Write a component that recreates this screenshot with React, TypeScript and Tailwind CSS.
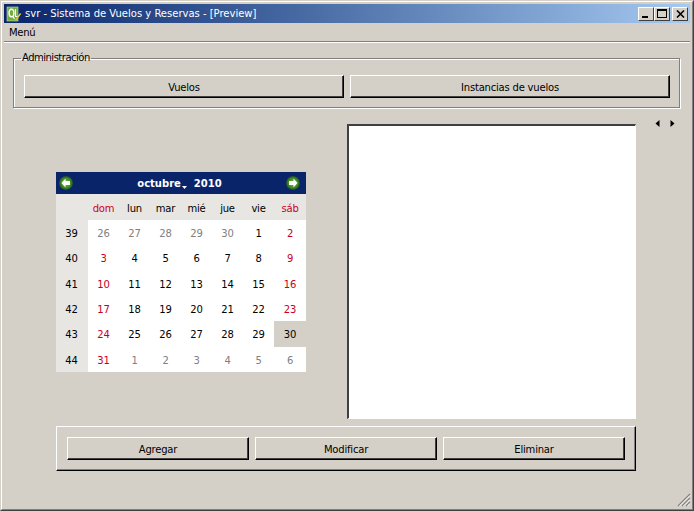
import { ReactNode } from "react";

const font = "font-['DejaVu_Sans',sans-serif]";

const weeks = [
  { n: 39, days: [26, 27, 28, 29, 30, 1, 2] },
  { n: 40, days: [3, 4, 5, 6, 7, 8, 9] },
  { n: 41, days: [10, 11, 12, 13, 14, 15, 16] },
  { n: 42, days: [17, 18, 19, 20, 21, 22, 23] },
  { n: 43, days: [24, 25, 26, 27, 28, 29, 30] },
  { n: 44, days: [31, 1, 2, 3, 4, 5, 6] },
];

const weekdays = ["dom", "lun", "mar", "mié", "jue", "vie", "sáb"];

function RaisedButton({ children }: { children: ReactNode }) {
  return (
    <button
      type="button"
      className="flex-1 h-[23px] pt-[1px] bg-[#d4d0c8] border-t border-l border-t-white border-l-white border-b border-r border-b-black border-r-black shadow-[inset_-1px_-1px_0_#404040] text-[10px] tracking-[-0.2px] text-black"
    >
      {children}
    </button>
  );
}

function CaptionButton({ children, className = "" }: { children: ReactNode; className?: string }) {
  return (
    <div
      className={`w-4 h-[14px] flex items-center justify-center bg-[#d4d0c8] border-t border-l border-t-white border-l-white border-b border-r border-b-[#404040] border-r-[#404040] ${className}`}
    >
      {children}
    </div>
  );
}

function AppIcon() {
  return (
    <svg width="16" height="16" viewBox="0 0 16 16" className="shrink-0">
      <rect x="1" y="1" width="11" height="14" fill="#6fae3c" />
      <rect x="1" y="1" width="11" height="14" fill="none" stroke="#c9e3a8" strokeWidth="0.6" />
      <ellipse cx="5.5" cy="7" rx="2.4" ry="3.8" fill="none" stroke="#fff" strokeWidth="1.4" />
      <path d="M6.5 10l2 3" stroke="#fff" strokeWidth="1.2" />
      <path d="M9.5 3v7.5h2" stroke="#fff" strokeWidth="1.2" fill="none" />
      <path d="M9 14l5-7 1.2 1-5 6.5z" fill="#e6c53a" />
    </svg>
  );
}

function NavArrow({ dir, id }: { dir: "left" | "right"; id: string }) {
  return (
    <svg width="16" height="16" viewBox="0 0 16 16">
      <defs>
        <radialGradient id={id} cx="50%" cy="50%" r="50%">
          <stop offset="0%" stopColor="#7fc04a" />
          <stop offset="70%" stopColor="#3f8a24" />
          <stop offset="100%" stopColor="#1c4a30" />
        </radialGradient>
      </defs>
      <circle cx="8" cy="8" r="7" fill={`url(#${id})`} />
      <path
        d={dir === "left" ? "M7.5 3.5L3.5 8l4 4.5V10H12V6H7.5z" : "M8.5 3.5L12.5 8l-4 4.5V10H4V6h4.5z"}
        fill="#fff"
      />
    </svg>
  );
}

function Calendar() {
  return (
    <div className="w-[250px] text-[10px] tracking-[-0.2px] bg-white">
      <div className="h-[22px] bg-[#0a246a] flex items-center justify-between pl-[2px] pr-[5px] text-white">
        <NavArrow dir="left" id="nav-prev" />
        <div className="flex items-center font-bold text-[10px] tracking-normal">
          <span>octubre</span>
          <svg width="5" height="3" viewBox="0 0 5 3" className="mt-[8px] ml-[1px] mr-[7px]">
            <path d="M0 0h5L2.5 3z" fill="#fff" />
          </svg>
          <span>2010</span>
        </div>
        <NavArrow dir="right" id="nav-next" />
      </div>
      <div className="grid grid-cols-[32px_repeat(6,31px)_32px] h-[26px] bg-[#e8e6e2] items-center text-center pt-[2px]">
        <span />
        {weekdays.map((d, i) => (
          <span key={d} className={i === 0 || i === 6 ? "text-[#c8001e]" : "text-black"}>
            {d}
          </span>
        ))}
      </div>
      {weeks.map((w, wi) => (
        <div key={w.n} className="grid grid-cols-[32px_repeat(6,31px)_32px] h-[25.34px]">
          <span className="bg-[#e8e6e2] flex items-center justify-center text-black pt-[2px] pr-[1px]">{w.n}</span>
          {w.days.map((d, i) => {
            const other = (wi === 0 && i < 5) || (wi === 5 && i > 0);
            const selected = wi === 4 && i === 6;
            const color = other ? "text-[#808080]" : i === 0 || i === 6 ? "text-[#c8001e]" : "text-black";
            return (
              <span
                key={i}
                className={`flex items-center justify-center pt-[2px] ${selected ? "bg-[#d4d0c8] text-black" : `bg-white ${color}`}`}
              >
                {d}
              </span>
            );
          })}
        </div>
      ))}
    </div>
  );
}

export default function App() {
  return (
    <div className={`w-[694px] h-[511px] relative border-t border-l border-t-[#d4d0c8] border-l-[#d4d0c8] border-b border-r border-b-[#404040] border-r-[#404040] ${font} overflow-hidden`}>
      <div className="h-full border-t border-l border-t-white border-l-white border-b border-r border-b-[#808080] border-r-[#808080] bg-[#d4d0c8] p-[2px] flex flex-col">
        {/* title bar */}
        <div className="h-[19px] shrink-0 bg-gradient-to-r from-[#0a246a] to-[#a6caf0] flex items-center pl-[2px] pr-[2px] text-white text-[10px]">
          <AppIcon />
          <span className="ml-[3px] flex-1">svr - Sistema de Vuelos y Reservas - [Preview]</span>
          <CaptionButton>
            <span className="w-[6px] h-[2px] bg-black mt-[7px] mr-[3px]" />
          </CaptionButton>
          <CaptionButton>
            <span className="w-[10px] h-[9px] border border-t-2 border-black" />
          </CaptionButton>
          <CaptionButton className="ml-[2px]">
            <svg width="9" height="8" viewBox="0 0 9 8">
              <path d="M1 0.5l7 7M8 0.5l-7 7" stroke="#000" strokeWidth="1.6" />
            </svg>
          </CaptionButton>
        </div>

        {/* menu */}
        <div className="h-[19px] shrink-0 border-b border-b-[#808080] shadow-[0_1px_0_#fff] flex items-center px-[5px] text-[10px] tracking-[-0.3px] text-black">
          Menú
        </div>

        <main className="flex-1 flex flex-col px-[9px] pt-[9px]">
          <fieldset className="w-[667px] h-[57px] border border-[#808080] shadow-[1px_1px_0_#fff,inset_1px_1px_0_#fff] pl-[10px] pr-[9px] flex">
            <legend className="ml-[-3px] px-[1px] text-[10px] tracking-[-0.5px] text-black leading-[14px]">Administración</legend>
            <div className="flex gap-[6px] w-full mt-[10px]">
              <RaisedButton>Vuelos</RaisedButton>
              <RaisedButton>Instancias de vuelos</RaisedButton>
            </div>
          </fieldset>

          <div className="flex ml-[43px] mt-[9px]">
            <div className="w-[291px] pt-[55px]">
              <Calendar />
            </div>
            <div className="flex">
              <div className="w-[289px] h-[295px] mt-[7px] bg-white border-t-2 border-l-2 border-t-[#404040] border-l-[#404040] border-b border-r border-b-white border-r-white shadow-[1px_1px_0_#d4d0c8]" />
              <div className="flex gap-[10px] ml-[19px] h-[12px] items-center">
                <svg width="5" height="7" viewBox="0 0 5 7">
                  <path d="M4.5 0v7L0.5 3.5z" fill="#000" />
                </svg>
                <svg width="5" height="7" viewBox="0 0 5 7">
                  <path d="M0.5 0v7L4.5 3.5z" fill="#000" />
                </svg>
              </div>
            </div>
          </div>

          <div className="ml-[43px] mt-[7px] w-[580px] h-[45px] border-t border-l border-t-white border-l-white border-b border-r border-b-black border-r-black shadow-[inset_-1px_-1px_0_#808080] px-[10px] flex items-center gap-[6px]">
            <RaisedButton>Agregar</RaisedButton>
            <RaisedButton>Modificar</RaisedButton>
            <RaisedButton>Eliminar</RaisedButton>
          </div>
        </main>
      </div>

      {/* size grip */}
      <svg width="14" height="14" viewBox="0 0 14 14" className="absolute right-[2px] bottom-[3px]">
        <path d="M13 1L1 13M13 5L5 13M13 9L9 13" stroke="#808080" strokeWidth="1.2" />
        <path d="M13 2.5L2.5 13M13 6.5L6.5 13M13 10.5L10.5 13" stroke="#fff" strokeWidth="0.8" />
      </svg>
    </div>
  );
}
